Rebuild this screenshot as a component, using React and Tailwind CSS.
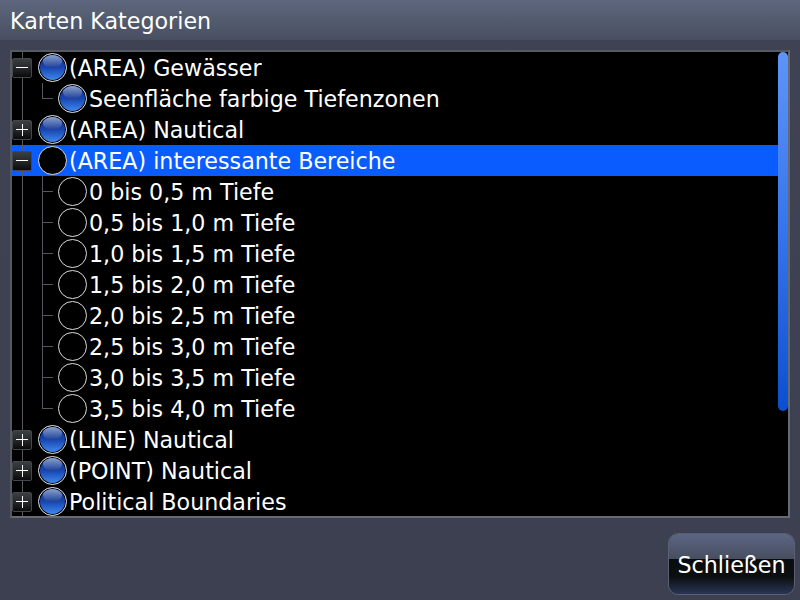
const font = { fontFamily: '"DejaVu Sans", sans-serif' };

function Toggle({ open }) {
  return (
    <div className="relative w-[20px] h-[20px] rounded-[2px] border border-[#44474c] bg-gradient-to-b from-[#3c3f42] via-[#26282a] to-[#0a0b0b] flex items-center justify-center">
      <div className="absolute w-[12px] h-[1px] bg-white" />
      {!open && <div className="absolute w-[1px] h-[12px] bg-white" />}
    </div>
  );
}

function Radio({ state }) {
  if (state === "on") {
    return (
      <div className="relative w-[29px] h-[29px] rounded-full border border-[#e8e8e8] bg-black p-[1px] shrink-0">
        <div className="w-full h-full rounded-full bg-gradient-to-b from-[#0c2c88] via-[#1a45b0] to-[#3f88ee] overflow-hidden relative">
          <div className="absolute left-[3px] right-[3px] top-0 h-[13px] rounded-b-[50%] bg-gradient-to-b from-[#8a9fcc] to-[#1f3e98]" />
        </div>
      </div>
    );
  }
  return <div className="w-[29px] h-[29px] rounded-full border border-[#dcdcdc] shrink-0 bg-black" />;
}

function Row({ toggle, child, last, radio, text, selected }) {
  return (
    <div className={`relative h-[31px] flex items-center ${selected ? "bg-[#0a5cff]" : ""}`}>
      <div className="relative w-[26px] h-full flex items-center justify-center shrink-0 pr-[6px]">
        <div className="absolute left-[10px] top-0 bottom-0 w-[1px] bg-[#55585c]" />
        {toggle && <div className="relative"><Toggle open={toggle === "open"} /></div>}
      </div>
      {child && (
        <div className="relative w-[20px] h-full shrink-0">
          <div className={`absolute left-[4px] top-0 w-[1px] bg-[#55585c] ${last ? "h-[15px]" : "h-full"}`} />
          <div className="absolute left-[4px] top-[15px] w-[11px] h-[1px] bg-[#55585c]" />
        </div>
      )}
      <Radio state={radio} />
      <span className="text-white text-[22.2px] leading-none whitespace-nowrap ml-[2px] relative top-[1px]" style={font}>{text}</span>
    </div>
  );
}

const rows = [
  { toggle: "open", radio: "on", text: "(AREA) Gewässer" },
  { child: true, last: true, radio: "on", text: "Seenfläche farbige Tiefenzonen" },
  { toggle: "closed", radio: "on", text: "(AREA) Nautical" },
  { toggle: "open", radio: "black", text: "(AREA) interessante Bereiche", selected: true },
  { child: true, radio: "off", text: "0 bis 0,5 m Tiefe" },
  { child: true, radio: "off", text: "0,5 bis 1,0 m Tiefe" },
  { child: true, radio: "off", text: "1,0 bis 1,5 m Tiefe" },
  { child: true, radio: "off", text: "1,5 bis 2,0 m Tiefe" },
  { child: true, radio: "off", text: "2,0 bis 2,5 m Tiefe" },
  { child: true, radio: "off", text: "2,5 bis 3,0 m Tiefe" },
  { child: true, radio: "off", text: "3,0 bis 3,5 m Tiefe" },
  { child: true, last: true, radio: "off", text: "3,5 bis 4,0 m Tiefe" },
  { toggle: "closed", radio: "on", text: "(LINE) Nautical" },
  { toggle: "closed", radio: "on", text: "(POINT) Nautical" },
  { toggle: "closed", radio: "on", text: "Political Boundaries" },
];

export default function App() {
  return (
    <div className="w-[800px] h-[600px] flex flex-col bg-gradient-to-b from-[#3e4252] to-[#3d4050] overflow-hidden" style={font}>
      <div className="h-[40px] shrink-0 flex items-center pl-[10px] bg-gradient-to-b from-[#5e677d] to-[#484f61]">
        <span className="text-white text-[22.2px] leading-none relative top-[1px]">Karten Kategorien</span>
      </div>
      <div className="mt-[10px] mx-[10px] w-[780px] h-[468px] shrink-0 border-2 border-[#666a72] bg-black flex overflow-hidden border-t-[#555962] border-l-[#555962]">
        <div className="flex-1 min-w-0 overflow-hidden">
          {rows.map((r) => <Row key={r.text} {...r} />)}
        </div>
        <div className="w-[10px] shrink-0 bg-black">
          <div className="h-[359px] rounded-[5px] bg-gradient-to-b from-[#5f94f8] via-[#3574ec] to-[#0a4fcf]" />
        </div>
      </div>
      <div className="flex justify-end mt-[15px] pr-[5px]">
        <div className="relative w-[127px] h-[62px] rounded-[10px] border border-[#5a5f72] overflow-hidden flex flex-col">
          <div className="h-[25px] bg-gradient-to-b from-[#5c6683] to-[#484e60]" />
          <div className="flex-1 bg-gradient-to-b from-[#0a0d0d] via-[#0c0f10] to-[#2b3558]" />
          <span className="absolute inset-0 flex items-center justify-center text-white text-[22.2px] leading-none pt-[3px]">Schließen</span>
        </div>
      </div>
    </div>
  );
}
